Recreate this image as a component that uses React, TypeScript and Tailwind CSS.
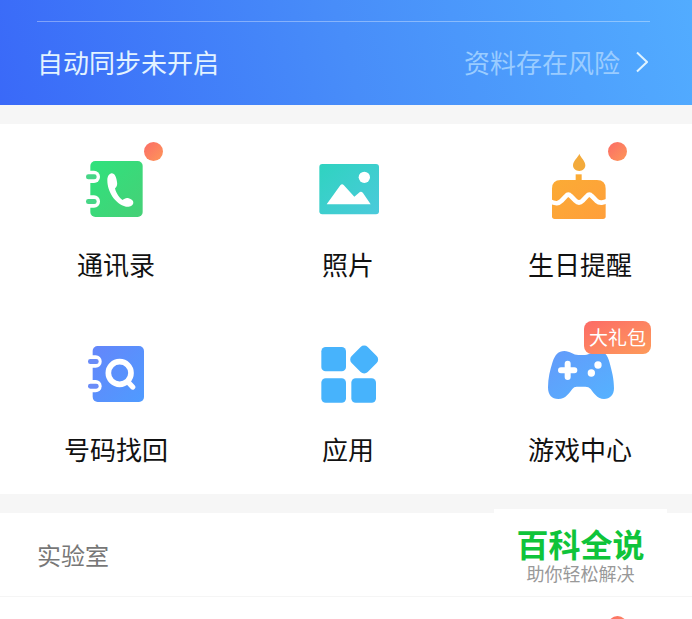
import type { ReactNode } from "react";

type Service = {
  label: string;
  icon: ReactNode;
  dot?: boolean;
  badge?: string;
};

function ContactsIcon() {
  return (
    <svg viewBox="24 39 288 240" className="size-full" aria-hidden="true">
      <defs>
        <linearGradient id="contacts" x1="0" y1="0" x2="1" y2="1">
          <stop offset="0" stopColor="#2fe27c" />
          <stop offset="1" stopColor="#46d077" />
        </linearGradient>
      </defs>
      <rect x="91" y="78" width="157" height="168" rx="15" fill="url(#contacts)" />
      <rect x="66" y="107" width="54" height="37" rx="18" fill="#fff" />
      <rect x="66" y="181" width="54" height="37" rx="18" fill="#fff" />
      <rect x="78" y="118" width="32" height="15" rx="7" fill="#46d687" />
      <rect x="78" y="192" width="32" height="15" rx="7" fill="#46d687" />
      <path
        d="M155 115C148 116 142 124 142 136C142 170 165 207 198 215C208 217 219 212 220 203C221 197 214 193 206 190C199 187 193 191 188 195C180 190 168 176 165 160C170 156 173 150 171 141C169 128 165 115 155 115Z"
        fill="#fff"
      />
    </svg>
  );
}

function PhotosIcon() {
  return (
    <svg viewBox="0 -6 288 240" className="size-full" aria-hidden="true">
      <defs>
        <linearGradient id="photos" x1="0" y1="0" x2="1" y2="1">
          <stop offset="0" stopColor="#2fd3c0" />
          <stop offset="1" stopColor="#4bcadb" />
        </linearGradient>
      </defs>
      <rect x="58" y="42" width="179" height="151" rx="9" fill="url(#photos)" />
      <circle cx="193" cy="82" r="17" fill="#fff" />
      <path d="M80 163L121 106Q126 100 131 105L163 140L177 128Q183 122 189 129L212 163Z" fill="#fff" />
    </svg>
  );
}

function CakeIcon() {
  return (
    <svg viewBox="36 39 288 240" className="size-full" aria-hidden="true">
      <defs>
        <linearGradient id="cake" x1="0" y1="0" x2="1" y2="1">
          <stop offset="0" stopColor="#fbab35" />
          <stop offset="1" stopColor="#ff9f3b" />
        </linearGradient>
      </defs>
      <path d="M178 56C174 68 159 77 159 91C159 101 167 108 178 108C188 108 196 101 196 91C196 77 182 68 178 56Z" fill="#f3aa3b" />
      <rect x="167" y="118" width="18" height="20" fill="#fbab35" />
      <path
        d="M122 135H231Q257 135 257 161V244Q257 252 249 252H104Q96 252 96 244V161Q96 135 122 135Z"
        fill="url(#cake)"
      />
      <path
        d="M88 198C108 208 116 206 125 197L138 183Q145 175 152 183L166 197Q177 208 188 197L201 183Q208 175 215 183L229 197C240 207 250 203 265 197"
        fill="none"
        stroke="#fff"
        strokeWidth="14"
      />
    </svg>
  );
}

function RecoverIcon() {
  return (
    <svg viewBox="24 -6 288 240" className="size-full" aria-hidden="true">
      <defs>
        <linearGradient id="recover" x1="0" y1="0" x2="1" y2="1">
          <stop offset="0" stopColor="#6486fa" />
          <stop offset="1" stopColor="#4f9bff" />
        </linearGradient>
      </defs>
      <rect x="98" y="33" width="154" height="168" rx="15" fill="url(#recover)" />
      <rect x="72" y="61" width="53" height="37" rx="18" fill="#fff" />
      <rect x="72" y="135" width="53" height="37" rx="18" fill="#fff" />
      <rect x="84" y="72" width="32" height="15" rx="7" fill="#6a8cf8" />
      <rect x="84" y="146" width="32" height="15" rx="7" fill="#6a8cf8" />
      <circle cx="179" cy="114" r="34" fill="none" stroke="#fff" strokeWidth="17" />
      <path d="M204 141L218 156" stroke="#fff" strokeWidth="16" strokeLinecap="round" />
    </svg>
  );
}

function AppsIcon() {
  return (
    <svg viewBox="0 -6 288 240" className="size-full" fill="#47b3fc" aria-hidden="true">
      <rect x="64" y="36" width="74" height="73" rx="13" />
      <rect x="158.5" y="39.5" width="68" height="68" rx="15" transform="rotate(45 192.5 73.5)" />
      <rect x="64" y="130" width="74" height="73" rx="13" />
      <rect x="154" y="130" width="74" height="73" rx="13" />
    </svg>
  );
}

function GamesIcon() {
  return (
    <svg viewBox="36 69 288 240" className="size-full" aria-hidden="true">
      <defs>
        <linearGradient id="games" x1="0" y1="0" x2="1" y2="1">
          <stop offset="0" stopColor="#639afa" />
          <stop offset="1" stopColor="#55b2ff" />
        </linearGradient>
      </defs>
      <path
        d="M133 123C150 123 160 135 175 135L195 135C210 135 215 124 235 124C255 125 262 135 268 155C276 185 282 205 282 235C282 255 270 267 252 267C232 267 222 250 212 237Q206 230 196 230L170 230Q162 230 157 237C146 250 138 267 115 267C95 267 84 255 84 232C84 205 90 180 98 155C105 135 115 123 133 123Z"
        fill="url(#games)"
      />
      <path d="M143 161V201M123 181H163" stroke="#fff" strokeWidth="18" strokeLinecap="round" />
      <circle cx="234" cy="165" r="11" fill="#fff" />
      <circle cx="214" cy="189" r="11" fill="#fff" />
    </svg>
  );
}

const services: Service[] = [
  { label: "通讯录", icon: <ContactsIcon />, dot: true },
  { label: "照片", icon: <PhotosIcon /> },
  { label: "生日提醒", icon: <CakeIcon />, dot: true },
  { label: "号码找回", icon: <RecoverIcon /> },
  { label: "应用", icon: <AppsIcon /> },
  { label: "游戏中心", icon: <GamesIcon />, badge: "大礼包" },
];

function Dot() {
  return (
    <span className="absolute -top-1.5 right-px size-[19px] rounded-full bg-linear-to-br from-[#fb6b66] to-[#fd9658]" />
  );
}

function ServiceButton({ label, icon, dot, badge }: Service) {
  return (
    <button type="button" className="flex flex-col items-center pt-6 pb-[25px]">
      <span className="relative block h-20 w-24">
        {icon}
        {dot && <Dot />}
        {badge && (
          <span className="absolute -top-3 left-[52px] flex h-[33px] w-[67px] items-center justify-center rounded-lg bg-linear-to-br from-[#fc6a66] to-[#fd9a5a] text-[19px] whitespace-nowrap text-white">
            {badge}
          </span>
        )}
      </span>
      <span className="mt-4 text-[26px] leading-10 text-[#111]">{label}</span>
    </button>
  );
}

export default function App() {
  return (
    <div className="flex h-screen flex-col overflow-hidden bg-white font-['Noto_Sans_CJK_SC',sans-serif]">
      <header className="shrink-0 bg-linear-75 from-[#3a69f8] via-[#488df9] to-[#52acff] pt-[21px] pr-[42px] pl-[37px]">
        <button
          type="button"
          className="flex w-full items-center border-t border-white/35 pt-5 pb-[23px] text-[26px] leading-10"
        >
          <span className="text-[#e3f3ff]">自动同步未开启</span>
          <span className="ml-auto text-[#9accff]">资料存在风险</span>
          <svg viewBox="0 0 12 22" className="mr-0.5 ml-4 h-[22px] w-3" fill="none" aria-hidden="true">
            <path d="M1 1.5L11 11L1 20.5" stroke="#dff3ff" strokeWidth="2" />
          </svg>
        </button>
      </header>

      <main className="shrink-0 border-t-[19px] border-[#f6f6f6]">
        <div className="-mr-1 grid grid-cols-3">
          {services.map((service) => (
            <ServiceButton key={service.label} {...service} />
          ))}
        </div>
      </main>

      <section className="relative shrink-0 border-t-[19px] border-[#f6f6f6]">
        <h2 className="border-b border-[#f5f5f5] pt-6 pb-[23px] pl-[37px] text-2xl leading-9 text-[#777]">实验室</h2>
        <div className="absolute -top-1 right-[25px] flex w-[173px] flex-col items-center bg-white pt-4 pb-2">
          <strong className="text-[32px] leading-9 font-bold text-[#0fc43a]">百科全说</strong>
          <span className="text-lg leading-6 text-[#999]">助你轻松解决</span>
        </div>
      </section>

      <div className="-mr-1 grid shrink-0 grid-cols-3 pt-[25px]">
        <span className="relative col-start-3 mx-auto h-20 w-24">
          <Dot />
        </span>
      </div>
    </div>
  );
}
